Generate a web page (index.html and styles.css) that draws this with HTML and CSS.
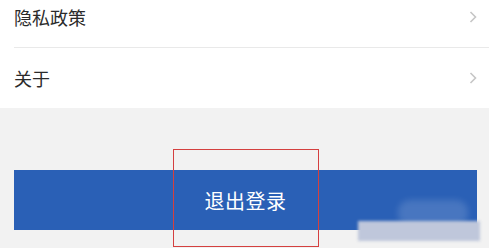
FILE: index.html
```html
<!DOCTYPE html>
<html lang="zh-CN">
<head>
    <meta charset="UTF-8">
    <meta name="viewport" content="width=device-width, initial-scale=1.0">
    <title>设置</title>
    <link rel="stylesheet" href="styles.css">
</head>
<body>
    <div class="menu">
        <div class="menu-item">
            <span>隐私政策</span>
            <svg class="arrow" width="8" height="12" viewBox="0 0 8 12"><path d="M1.5 1 L6.5 6 L1.5 11" fill="none" stroke="#c6c6c6" stroke-width="1.6"/></svg>
        </div>
        <div class="menu-item">
            <span>关于</span>
            <svg class="arrow" width="8" height="12" viewBox="0 0 8 12"><path d="M1.5 1 L6.5 6 L1.5 11" fill="none" stroke="#c6c6c6" stroke-width="1.6"/></svg>
        </div>
    </div>

    <div class="footer">
        <button class="logout-btn">退出登录</button>
        <div class="blob"></div>
        <div class="smudge"></div>
        <div class="mark"></div>
    </div>
</body>
</html>
```

FILE: styles.css
```css
html, body {
    height: 248px;
}

body {
    font-family: "Noto Sans CJK SC", "Noto Sans", sans-serif;
    background-color: #f2f2f2;
    margin: 0;
    padding: 0;
    overflow: hidden;
}

.menu {
    background-color: #fff;
    margin-top: -13px;
}

.menu-item {
    display: flex;
    align-items: center;
    justify-content: space-between;
    height: 60px;
    margin-left: 14px;
    padding-right: 12px;
    font-size: 18px;
    color: #2b2b2b;
}

.menu-item:first-child {
    border-bottom: 1px solid #e9e9e9;
}

.footer {
    position: relative;
    padding: 62px 12px 0 14px;
}

.logout-btn {
    display: block;
    width: 463px;
    height: 60px;
    border: none;
    background-color: #2a60b6;
    color: #fff;
    font-family: inherit;
    font-size: 20px;
    letter-spacing: 0.5px;
}

.mark {
    position: absolute;
    z-index: 2;
    left: 173px;
    top: 41px;
    width: 144px;
    height: 96px;
    border: 1px solid #d4403f;
}

.smudge {
    position: absolute;
    z-index: 1;
    left: 358px;
    top: 113px;
    width: 122px;
    height: 20px;
    background: #bfc7db;
    filter: blur(1.5px);
}

.blob {
    position: absolute;
    z-index: 1;
    left: 398px;
    top: 92px;
    width: 70px;
    height: 26px;
    border-radius: 12px;
    background: rgba(255, 255, 255, 0.14);
    filter: blur(3px);
}
```
